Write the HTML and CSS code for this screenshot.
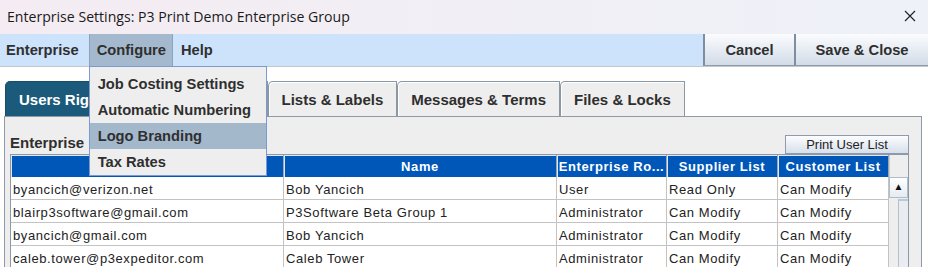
FILE: index.html
```html
<!DOCTYPE html>
<html>
    <head>
        <title>Enterprise Settings</title>
        <meta charset = "utf-8">
        <link rel="stylesheet" href="styles.css">
    </head>
    <body>
        <div class = "window">
            <div class = "titlebar">
                <span class = "title">Enterprise Settings: P3 Print Demo Enterprise Group</span>
                <svg class = "close" width="12" height="12" viewBox="0 0 12 12">
                    <path d="M1 1 L11 11 M11 1 L1 11" stroke="#1e1e1e" stroke-width="1.1" fill="none"/>
                </svg>
            </div>

            <div class = "menubar">
                <div class = "menu first">Enterprise</div>
                <div class = "menu open">Configure
                    <div class = "dropdown">
                        <div class = "item">Job Costing Settings</div>
                        <div class = "item">Automatic Numbering</div>
                        <div class = "item active">Logo Branding</div>
                        <div class = "item">Tax Rates</div>
                    </div>
                </div>
                <div class = "menu">Help</div>
                <div class = "spacer"></div>
                <div class = "bar-btn cancel">Cancel</div>
                <div class = "bar-btn save">Save &amp; Close</div>
            </div>

            <div class = "content">
                <div class = "tabs">
                    <div class = "tab selected">Users Rights</div>
                    <!-- this tab sits under the open menu -->
                    <div class = "tab behind"></div>
                    <div class = "tab">Lists &amp; Labels</div>
                    <div class = "tab">Messages &amp; Terms</div>
                    <div class = "tab">Files &amp; Locks</div>
                </div>

                <div class = "panel">
                    <div class = "panel-top">
                        <span class = "label">Enterprise</span>
                        <div class = "print-btn">Print User List</div>
                    </div>
                    <div class = "grid">
                        <table class = "users">
                            <colgroup>
                                <col class = "c-email">
                                <col class = "c-name">
                                <col class = "c-small">
                                <col class = "c-small2">
                                <col class = "c-small2">
                            </colgroup>
                            <thead>
                                <tr>
                                    <th></th>
                                    <th>Name</th>
                                    <th>Enterprise Ro...</th>
                                    <th>Supplier List</th>
                                    <th>Customer List</th>
                                </tr>
                            </thead>
                            <tbody>
                                <tr>
                                    <td>byancich@verizon.net</td>
                                    <td>Bob Yancich</td>
                                    <td>User</td>
                                    <td>Read Only</td>
                                    <td>Can Modify</td>
                                </tr>
                                <tr>
                                    <td>blairp3software@gmail.com</td>
                                    <td>P3Software Beta Group 1</td>
                                    <td>Administrator</td>
                                    <td>Can Modify</td>
                                    <td>Can Modify</td>
                                </tr>
                                <tr>
                                    <td>byancich@gmail.com</td>
                                    <td>Bob Yancich</td>
                                    <td>Administrator</td>
                                    <td>Can Modify</td>
                                    <td>Can Modify</td>
                                </tr>
                                <tr>
                                    <td>caleb.tower@p3expeditor.com</td>
                                    <td>Caleb Tower</td>
                                    <td>Administrator</td>
                                    <td>Can Modify</td>
                                    <td>Can Modify</td>
                                </tr>
                            </tbody>
                        </table>
                        <div class = "scrollbar">
                            <div class = "corner"></div>
                            <div class = "arrow">&#9650;</div>
                            <div class = "track"><div class = "thumb"></div></div>
                        </div>
                    </div>
                </div>
            </div>
        </div>
    </body>
</html>
```

FILE: styles.css
```css
body
{
    margin: 0;
    width: 928px;
    height: 267px;
    overflow: hidden;
    background: #ffffff;
}
.window
{
    display: flex;
    flex-direction: column;
    height: 100%;
}
.titlebar
{
    flex-shrink: 0;
    height: 34px;
    display: flex;
    align-items: center;
    justify-content: space-between;
    padding: 0 12px 2px 7px;
    box-sizing: border-box;
    background: linear-gradient(to right, #f4ecf2, #eef1f8);
}
.title
{
    font-family: 'Open Sans', sans-serif;
    font-size: 14.1px;
    color: #1a1a1a;
}
.menubar
{
    flex-shrink: 0;
    height: 33px;
    display: flex;
    background: #cde2fb;
    border-bottom: 1px solid #c4c6ca;
    box-sizing: border-box;
    font-family: 'Liberation Sans', Arial, sans-serif;
    font-weight: bold;
    font-size: 14.7px;
    color: #2f2f2f;
}
.menu
{
    position: relative;
    padding: 0 8px;
    line-height: 33px;
}
.menu.first
{
    padding: 0 10px 0 6px;
}
.menu.open
{
    background: #a4b9cd;
    border-left: 1px solid #8ea3b8;
    border-right: 1px solid #8ea3b8;
    padding: 0 6px 0 7px;
}
.spacer
{
    flex: 1;
}
.bar-btn
{
    text-align: center;
    line-height: 33px;
    border-left: 2px solid #7f8e9e;
    border-bottom: 1px solid #8f9cab;
    background: linear-gradient(to bottom, #fbfcfe, #d2dce8);
}
.cancel
{
    width: 89px;
}
.save
{
    width: 132px;
}
.dropdown
{
    position: absolute;
    left: -1px;
    top: 32px;
    width: 178px;
    box-sizing: border-box;
    padding: 4px 0 0 0;
    background: #eeeeee;
    border: 1px solid #7b9bd0;
    z-index: 5;
    line-height: 26px;
}
.item
{
    height: 26px;
    padding-left: 8px;
}
.item.active
{
    background: #a4b8cc;
}
.content
{
    flex: 1;
    padding-top: 14px;
    display: flex;
    flex-direction: column;
    min-height: 0;
}
.tabs
{
    flex-shrink: 0;
    display: flex;
    padding-left: 5px;
    height: 35px;
    font-family: 'Liberation Sans', Arial, sans-serif;
    font-weight: bold;
    font-size: 15px;
    color: #2f2f2f;
}
.tab
{
    height: 35px;
    line-height: 36px;
    padding: 0 13px;
    border: 1px solid #8a97a5;
    border-bottom: none;
    border-top-left-radius: 5px;
    box-sizing: border-box;
    background: #eeeeee;
    box-shadow: inset 1px 1px 0 #ffffff;
    white-space: nowrap;
}
.tab.selected
{
    background: #1c5a7b;
    border-color: #184d69;
    color: #ffffff;
    box-shadow: none;
}
.tab.behind
{
    width: 142px;
}
.panel
{
    flex-shrink: 0;
    width: 918px;
    height: 160px;
    margin-left: 4px;
    box-sizing: border-box;
    border: 1px solid #8f9aa6;
    border-bottom: none;
    background: #eeeeee;
}
.panel-top
{
    height: 37px;
    display: flex;
    align-items: flex-end;
    justify-content: space-between;
    padding: 0 12px 0 5px;
}
.label
{
    font-family: 'Liberation Sans', Arial, sans-serif;
    font-weight: bold;
    font-size: 15px;
    color: #2f2f2f;
    line-height: 20px;
    margin-bottom: 1px;
}
.print-btn
{
    width: 124px;
    height: 19px;
    box-sizing: border-box;
    border: 1px solid #8d9bb0;
    background: linear-gradient(to bottom, #fdfdfe, #d6dfeb);
    font-family: 'Liberation Sans', Arial, sans-serif;
    font-size: 13px;
    color: #222222;
    text-align: center;
    line-height: 17px;
}
.grid
{
    display: flex;
    align-items: flex-start;
    margin-left: 5px;
    width: 899px;
    border-top: 1px solid #8d99a7;
    border-left: 1px solid #8d99a7;
    box-sizing: border-box;
}
.users
{
    width: 878px;
    table-layout: fixed;
    border-collapse: separate;
    border-spacing: 0;
    font-family: 'Liberation Sans', Arial, sans-serif;
    font-size: 13px;
    background: #ffffff;
}
.c-email, .c-name
{
    width: 273px;
}
.c-small
{
    width: 110px;
}
.c-small2
{
    width: 111px;
}
.users th
{
    height: 22px;
    padding: 0;
    background: #0057b8;
    color: #ffffff;
    font-weight: bold;
    letter-spacing: 0.6px;
    text-align: center;
    white-space: nowrap;
    overflow: hidden;
    border-right: 1px solid #9aa6b4;
    box-shadow: inset 1px 1px 0 #dfe7f2;
}
.users td
{
    height: 19px;
    padding: 3px 0 0 2px;
    color: #222222;
    letter-spacing: 0.6px;
    white-space: nowrap;
    overflow: hidden;
    border-right: 1px solid #c3c3c3;
    border-bottom: 1px solid #c3c3c3;
}
.scrollbar
{
    width: 20px;
    height: 114px;
    display: flex;
    flex-direction: column;
    border-right: 1px solid #8d99a7;
    box-sizing: border-box;
}
.corner
{
    height: 22px;
    background: #eeeeee;
    border-left: 1px solid #c8ccd2;
}
.arrow
{
    height: 21px;
    box-sizing: border-box;
    border: 1px solid #b0bccb;
    background: linear-gradient(to bottom, #ffffff, #e6ebf1);
    font-size: 10px;
    line-height: 18px;
    text-align: center;
    color: #111111;
}
.track
{
    flex: 1;
    background: #eeeeee;
    padding-top: 1px;
    overflow: hidden;
}
.thumb
{
    margin-left: 9px;
    height: 100px;
    border-left: 1px solid #b5c0cc;
    border-top: 2px solid #b9c9dc;
    background: #e9edf2;
}
```
